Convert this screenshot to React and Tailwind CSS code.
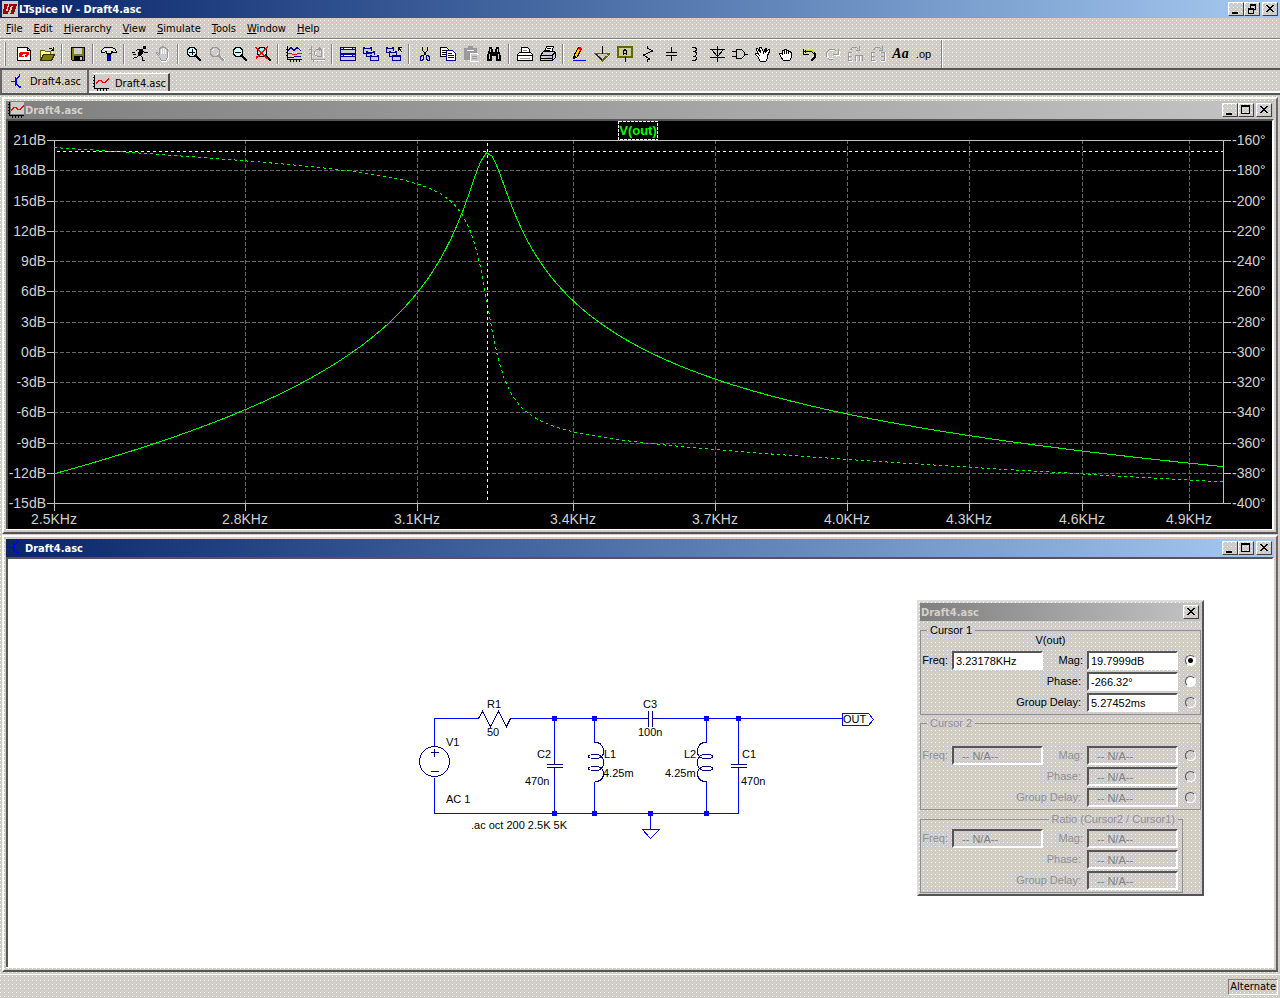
import React, { useState } from 'react';

// Shared looks
const FACE = 'bg-[#cccccc] bg-[image:conic-gradient(at_1px_1px,transparent_75%,#ffffcc_0),conic-gradient(at_1px_1px,transparent_75%,#ffcccc_0)] bg-size-[4px_4px] bg-position-[0_0,2px_2px]';
const RAISED = 'border border-t-white border-l-white border-r-[#404040] border-b-[#404040]';
const UI_FONT = "font-['DejaVu_Sans_Condensed','DejaVu_Sans',sans-serif]";

const ICONS = {
  newSchematic: (
    <>
      <path d="M1.5 1.5h10l3 3v10h-13z" fill="#fff" stroke="#000" />
      <path d="M11.500 1.500v3h3" fill="none" stroke="#000" />
      <path d="M4 6h4v1L6 10h2v1H3V9zM8 6h5v2l-2 3H9V9l1-1H8z" fill="#f00" />
    </>
  ),
  open: (
    <>
      <path d="M1.500 14V4.500h4l1 1h5V8" fill="#ff9" stroke="#660" />
      <path d="M1.500 14.500l3-6h11l-3 6z" fill="#808000" stroke="#330" />
      <path d="M9.500 3.500l1-1h2l2 2M14.500 1v3.500H12" fill="none" stroke="#000" />
    </>
  ),
  save: (
    <>
      <path d="M1.500 1.500h13v13h-12l-1-1z" fill="#808000" stroke="#000" />
      <path d="M4 2h8v6H4z" fill="#ccc" />
      <path d="M4 10h9v4H4z" fill="#000" />
      <path d="M10 11h2v3h-2z" fill="#ccc" />
    </>
  ),
  hammer: (
    <>
      <path d="M.5 6.500v-2l3-3h8l3 2 1 3h-3l-2-1v2h-5v-2l-3 1z" fill="#ddd" stroke="#000" />
      <path d="M3 3h8v1H3z" fill="#fff" />
      <path d="M6 7h4v2H6z" fill="#000" />
      <path d="M6.500 9.500h3v5h-3z" fill="#00f" stroke="#009" />
    </>
  ),
  run: (
    <>
      <path d="M11 0h3v3h-3zM7 4h4v3l-2 3H7l-1-2z" fill="#000" />
      <path d="M3.500 5.500l2-2h4l2 2 1 1h3M8.500 9.500l2 2v3h2M6.500 9.500l-2 2h-2l-2 2M10.500 3.500l-4 5M0 6.500h3M1 8.500h3" fill="none" stroke="#000" />
    </>
  ),
  halt: (
    <>
      <path d="M4.500 10.500l-3-3v-1h1l2 2v-6h1v-1h2v-1h1v1h2v1h1v1h1v8l-2 3h-4l-2-3" fill="#ccc" stroke="#999" />
      <path d="M6.500 3v5M8.500 2v6M10.500 3v5M6 15.500h5l2-3v-7" fill="none" stroke="#fff" />
    </>
  ),
  zoomIn: (
    <>
      <path d="M4 1.500h4l2.500 2.500v4L8 10.500H4L1.500 8V4z" fill="#cff" stroke="#000" />
      <path d="M3 6h6M6 3v6" stroke="#000" strokeWidth="1" />
      <path d="M10 10l5 5" stroke="#000" strokeWidth="2.500" />
    </>
  ),
  zoomPan: (
    <>
      <path d="M4 1.500h4l2.500 2.500v4L8 10.500H4L1.500 8V4z" fill="#ccc" stroke="#999" />
      <path d="M3 5l2-2M8 9l1-2" stroke="#fff" />
      <path d="M10 10l5 5" stroke="#999" strokeWidth="2.500" />
      <path d="M12 10l4 4" stroke="#fff" />
    </>
  ),
  zoomOut: (
    <>
      <path d="M4 1.500h4l2.500 2.500v4L8 10.500H4L1.500 8V4z" fill="#cff" stroke="#000" />
      <path d="M3 6.500h6" stroke="#000" />
      <path d="M10 10l5 5" stroke="#000" strokeWidth="2.500" />
    </>
  ),
  zoomFit: (
    <>
      <path d="M5 1.500h4l2.500 2.500v4L9 10.500H5L2.500 8V4z" fill="#9ff" stroke="#000" />
      <path d="M11 10l5 5" stroke="#000" strokeWidth="2.500" />
      <path d="M1 1l11 12M13 1L1 12" stroke="#f00" strokeWidth="1.500" />
    </>
  ),
  waveforms: (
    <>
      <path d="M1.500 0v13.500h14M0 3.500h2M0 6.500h2M0 9.500h2M4.500 13v3M7.500 13v3M10.500 13v3M13.500 13v3" fill="none" stroke="#000" />
      <path d="M2 4.500l3-3 3 3 3-3 4 3" fill="none" stroke="#009" />
      <path d="M2 7.500h3l2 1h3l2-1h4" fill="none" stroke="#f00" />
      <path d="M2 11.500h5l2-1h6" fill="none" stroke="#009" />
    </>
  ),
  autorange: (
    <>
      <path d="M2.500 0v13.500h13M0 3.500h3M0 7.500h3M4.500 13v3M8.500 13v3M12.500 13v3" fill="none" stroke="#999" />
      <path d="M5.500 8.500v-3l2-2h5v7h-4l-3-2M10.500 1v4M9 2.500h3M12.500 4v7" fill="none" stroke="#999" />
      <path d="M14.500 2v10M5 14.500h10M6.500 6v3" stroke="#fff" />
    </>
  ),
  tileWindows: (
    <>
      <path d="M.5 1.500h15v13H.5z" fill="#ccc" stroke="#009" />
      <path d="M0 1h16v3H0zM0 7h16v4H0z" fill="#009" />
      <path d="M4 2.500h8M4 9.500h8" stroke="#fff" />
      <path d="M1 2h2v1H1zM13 2h2v1h-2zM1 9h2v1H1zM13 9h2v1h-2z" fill="#ccc" />
    </>
  ),
  cascade: (
    <>
      <path d="M.5 1.500h8v6h-8zM3.500 5.500h8v5h-8zM7.500 9.500h8v5h-8z" fill="#ccc" stroke="#009" />
      <path d="M0 1h9v2H0zM3 5h9v2H3zM7 9h9v2H7z" fill="#009" />
      <path d="M2 1.500h5M5 5.500h5M9 9.500h5" stroke="#ccf" />
    </>
  ),
  closeAll: (
    <>
      <path d="M.5 1.500h7v5h-7zM3.500 5.500h7v5h-7zM6.500 9.500h8v5h-8z" fill="#ccc" stroke="#009" />
      <path d="M0 1h8v2H0zM3 5h8v2H3zM6 9h9v2H6z" fill="#009" />
      <path d="M2 1.500h4M5 5.500h4M8 12.500h4" stroke="#ccf" />
      <path d="M12 1.500h4M12.500 1v4M12 1l4 5" stroke="#000" />
    </>
  ),
  cut: (
    <>
      <path d="M5.500 1v3l4 6M10.500 1v3l-4 6" fill="none" stroke="#000" />
      <path d="M4.500 9.500h2v3l-1 2h-2v-3zM9.500 9.500h2l1 2v3h-2l-1-2z" fill="none" stroke="#009" />
    </>
  ),
  copy: (
    <>
      <path d="M.5 1.500h6l2 2v7h-8z" fill="#fff" stroke="#000" />
      <path d="M2 4.500h4M2 6.500h4M2 8.500h4" stroke="#000" />
      <path d="M6.500 4.500h6l3 3v7h-9z" fill="#fff" stroke="#009" />
      <path d="M8 7.500h4M8 9.500h6M8 11.500h6" stroke="#009" />
    </>
  ),
  paste: (
    <>
      <path d="M1 2h4V0h5v2h4v12H1z" fill="#999" />
      <path d="M4 4h7" stroke="#fff" />
      <path d="M7 7h6l3 2v6H7z" fill="#ccc" stroke="#fff" />
      <path d="M9 10.500h5M9 12.500h5" stroke="#999" />
    </>
  ),
  find: (
    <>
      <path d="M3 1h3v2h1v3h2V3h1V1h3v3l2 6v5h-5v-5H6v5H1v-5l2-6z" fill="#000" />
      <path d="M4.500 3v3M3.500 8v5M11.500 3v3M12.500 8v5" stroke="#ccc" />
    </>
  ),
  printSetup: (
    <>
      <path d="M4.500 6.500v-5h6l2 2v3" fill="#fff" stroke="#000" />
      <path d="M.5 8.500l2-2h11l2 2v6H.5z" fill="#fff" stroke="#000" />
      <path d="M1 9.500h14" stroke="#000" />
      <path d="M3 12.500h10M6 4.500h4" stroke="#999" />
    </>
  ),
  print: (
    <>
      <path d="M4.500 6l2-5.500h7L12 6" fill="#fff" stroke="#000" />
      <path d="M7 2.500h4M6 4.500h4" stroke="#000" />
      <path d="M.5 9.500l3-4h11l1 2v4l-3 3H.5z" fill="#ccc" stroke="#000" />
      <path d="M1 9.500h11l3-3M1 12.500h11M12.500 9v5" fill="none" stroke="#000" />
      <path d="M7 11.500h4" stroke="#cc0" />
    </>
  ),
  wire: (
    <>
      <path d="M3.500 8.500l4-7 3 1-4 8-3 2z" fill="#fc0" stroke="#000" />
      <path d="M8 1l3 1-1 3-3-2z" fill="#f00" />
      <path d="M2 10h3l-3 4z" fill="#000" />
      <path d="M2 14.500h13" stroke="#00f" />
    </>
  ),
  ground: (
    <>
      <path d="M1.500 7.500h14l-7 7z" fill="#ccc" stroke="#660" strokeWidth="1.500" />
      <path d="M3 9.500h11" stroke="#cc6" />
      <path d="M8.500 0v8M2 8l6.500 6.500" stroke="#000" />
    </>
  ),
  label: (
    <>
      <path d="M1 1h14v10H1z" fill="#cc9" stroke="#660" strokeWidth="2" />
      <path d="M8.500 11v5M6.500 9V5.500l1-2h1l1 2V9M6.500 7.500h3" fill="none" stroke="#000" />
    </>
  ),
  resistor: <path d="M7.500 0v2l5 3-9 4 6 4-2 1v2" fill="none" stroke="#000" />,
  capacitor: <path d="M8.500 1v6M8.500 9v6M3 6.500h11M3 9.500h11" fill="none" stroke="#000" />,
  inductor: <path d="M6 1.500h3l1.500 1.500v1L9 5.500H7h2L10.500 7v1.500L9 10H7h2l1.500 1.500V13L9 14.500H6" fill="none" stroke="#000" />,
  diode: (
    <>
      <path d="M2.500 3.500h12l-6 7z" fill="#ccc" stroke="#000" />
      <path d="M8.500 0v16M1 3.500h15M1 11.500h15" stroke="#000" />
    </>
  ),
  gate: <path d="M4.500 3.500v9h5l3-3v-3l-3-3zM0 5.500h4M0 10.500h4M13 8.500h3" fill="none" stroke="#000" />,
  move: (
    <path d="M5.500 15.500l-3-5-2-2v-1h2l2 2-3-5v-2h1l3 4-1-5h2l2 5 2-4h1l-1 4 3-3h1v2l-2 4v3l-2 3z" fill="#fff" stroke="#000" />
  ),
  drag: (
    <>
      <path d="M5.500 14.500l-3-4-1-3h2l1 1v-4h2v-1h2v1h2v1h2l1 2v4l-2 3z" fill="#fff" stroke="#000" />
      <path d="M6.500 5v3M8.500 5v3M10.500 5v3" stroke="#000" />
    </>
  ),
  undo: (
    <>
      <path d="M3.500 6.500l2-2h5l3 3v4l-2 2h-2" fill="none" stroke="#000" strokeWidth="2" />
      <path d="M5 4.500h6l2 2" fill="none" stroke="#cc0" />
      <path d="M2.500 3v5.500H8" fill="none" stroke="#000" />
    </>
  ),
  redo: (
    <>
      <path d="M12.500 5.500l-2-2h-5l-3 3v4l3 3h3" fill="none" stroke="#999" />
      <path d="M14.500 3v5.500H9" fill="none" stroke="#999" />
      <path d="M3.500 7v4l2 1.500h3M10 9.500h5.500v-5M6 4.500h4" fill="none" stroke="#fff" />
    </>
  ),
  rotate: (
    <>
      <path d="M3.500 4l2-2.500h4l2 2M12.500 0v4.500H9M5 6.500H1.500v8H5M2 10.500h3M8.500 15V9.500h7V15M12 10v5" fill="none" stroke="#999" />
      <path d="M2.500 7v3M2.500 12v2M2 15.500h4M9.500 10v6M13.500 10v6" stroke="#fff" />
    </>
  ),
  mirror: (
    <>
      <path d="M3.500 4l2-2.500h4l2 2M12.500 0v4.500H9M5 6.500H1.500v8H5M2 10.500h3M11 6.500h3.500v8H11M14 10.500h-3" fill="none" stroke="#999" />
      <path d="M2.500 7v3M2.500 12v2M2 15.500h4M15.500 6v10M11 15.500h5" stroke="#fff" />
    </>
  ),
};

// null marks a separator
const TOOLBAR = [
  ['New Schematic', 'newSchematic'], ['Open', 'open'], null,
  ['Save', 'save'], null,
  ['Control Panel', 'hammer'], null,
  ['Run', 'run'], ['Halt', 'halt'], null,
  ['Zoom to rectangle', 'zoomIn'], ['Pan', 'zoomPan'], ['Zoom back', 'zoomOut'], ['Zoom full extents', 'zoomFit'], null,
  ['Pick visible traces', 'waveforms'], ['Autorange', 'autorange'], null,
  ['Tile windows', 'tileWindows'], ['Cascade windows', 'cascade'], ['Close all windows', 'closeAll'], null,
  ['Cut', 'cut'], ['Copy', 'copy'], ['Paste', 'paste'], ['Find', 'find'], null,
  ['Print Setup', 'printSetup'], ['Print', 'print'], null,
  ['Wire', 'wire'], ['Ground', 'ground'], ['Label Net', 'label'], ['Resistor', 'resistor'],
  ['Capacitor', 'capacitor'], ['Inductor', 'inductor'], ['Diode', 'diode'], ['Component', 'gate'],
  ['Move', 'move'], ['Drag', 'drag'], ['Undo', 'undo'], ['Redo', 'redo'], ['Rotate', 'rotate'], ['Mirror', 'mirror'],
];

const MENU = ['File', 'Edit', 'Hierarchy', 'View', 'Simulate', 'Tools', 'Window', 'Help'];

const Icon = ({ children, className = '' }) => (
  <svg viewBox="0 0 16 16" shapeRendering="crispEdges" className={`size-4 shrink-0 ${className}`} aria-hidden="true">
    {children}
  </svg>
);

const PlotIcon = () => (
  <Icon>
    <path d="M3 0h13v12H3z" fill="#ccc" />
    <path d="M1.500 0v13.500H16M0 2.500h2M0 5.500h2M0 8.500h2M0 11.500h2M4.500 13v3M7.500 13v3M10.500 13v3M13.500 13v3" fill="none" stroke="#000" />
    <path d="M3 8.500l3-3h2l2 2h2l4-4" fill="none" stroke="#f00" strokeWidth="1.500" />
  </Icon>
);

const TransistorIcon = () => (
  <Icon>
    <path d="M1 7.500h4M5.500 3v9M6 5.500l3-3V0M6 9.500l4 4" fill="none" stroke="#00f" />
    <path d="M5 4h2v7H5zM8 14h3v-3z" fill="#00f" />
  </Icon>
);

const CAPTION_GLYPHS = {
  Minimize: <path d="M3 9h6v2H3z" />,
  Maximize: <path d="M2 1h9v9H2zM3 3v6h7V3z" fillRule="evenodd" />,
  Restore: <path d="M5 1h6v6H9v4H3V5h2zM6 3v2h3v1h1V3zM4 7v3h4V7z" fillRule="evenodd" />,
  Close: <path d="M3 2h2v1h1v1h2V3h1V2h2v1h-1v1H9v1H8v1h1v1h1v1h1v1H9V8H8V7H6v1H5v1H3V8h1V7h1V6h1V5H5V4H4V3H3z" />,
};

const CaptionButton = ({ kind, className = '' }) => (
  <button type="button" aria-label={kind} className={`flex h-3.5 w-4 shrink-0 items-center ${FACE} ${RAISED} ${className}`}>
    <svg viewBox="0 0 14 12" shapeRendering="crispEdges" className="h-3 w-3.5" aria-hidden="true">
      {CAPTION_GLYPHS[kind]}
    </svg>
  </button>
);

const ChildWindow = ({ title, icon, active, children }) => (
  <section className="border-2 border-t-white border-l-white border-r-[#666] border-b-[#555] p-0.5">
    <header
      className={`flex h-[18px] items-center px-0.5 ${
        active ? 'bg-linear-to-r from-[#0a246a] to-[#a6caf0] text-white' : 'bg-linear-to-r from-[#808080] to-[#c4c4c4] text-[#d4d0c8]'
      }`}
    >
      {icon}
      <h2 className="ml-px flex-1 pt-0.5 text-[11px] font-bold">{title}</h2>
      <CaptionButton kind="Minimize" />
      <CaptionButton kind="Maximize" />
      <CaptionButton kind="Close" className="ml-0.5" />
    </header>
    <div className="relative border-2 border-t-[#555] border-l-[#555] border-r-white border-b-0">
      {children}
    </div>
    <div className="h-px bg-white" />
  </section>
);

// ---- AC analysis: 50 ohm source, two LC tanks coupled by a capacitor ----
const mul = (a, b) => [a[0] * b[0] - a[1] * b[1], a[0] * b[1] + a[1] * b[0]];
const add = (a, b) => [a[0] + b[0], a[1] + b[1]];
const div = (a, b) => {
  const d = b[0] * b[0] + b[1] * b[1];
  return [(a[0] * b[0] + a[1] * b[1]) / d, (a[1] * b[0] - a[0] * b[1]) / d];
};

const response = (f) => {
  const w = 2 * Math.PI * f;
  const tank = add([0, w * 470e-9], div([1, 0], [0.001, w * 4.25e-3]));
  const couple = [0, w * 100e-9];
  const out = add(couple, tank);
  const node1 = add(add([1 / 50, 0], tank), couple);
  const det = add(mul(node1, out), mul([-1, 0], mul(couple, couple)));
  const v = div(mul([1 / 50, 0], couple), det);
  let phase = (Math.atan2(v[1], v[0]) * 180) / Math.PI;
  if (phase > -100) phase -= 360;
  return { mag: 20 * Math.log10(Math.hypot(v[0], v[1])), phase };
};

const LEFT = 46;
const RIGHT = 1215;
const TOP = 19;
const BOTTOM = 382;
const xOf = (f) => LEFT + (RIGHT - LEFT) * Math.log2(f / 2500);
const magY = (db) => TOP + ((21 - db) / 36) * (BOTTOM - TOP);
const phaseY = (deg) => TOP + ((-160 - deg) / 240) * (BOTTOM - TOP);

const SWEEP = Array.from({ length: 201 }, (_, i) => {
  const f = 2500 * 2 ** (i / 200);
  return { x: xOf(f), ...response(f) };
});
const magLine = SWEEP.map((p) => `${p.x.toFixed(1)},${(magY(p.mag) + 1).toFixed(1)}`).join(' ');
const phaseLine = SWEEP.map((p) => `${p.x.toFixed(1)},${(phaseY(p.phase) + 1).toFixed(1)}`).join(' ');

const DB_TICKS = Array.from({ length: 13 }, (_, i) => 21 - i * 3);
const KHZ_TICKS = ['2.5', '2.8', '3.1', '3.4', '3.7', '4.0', '4.3', '4.6', '4.9'];

const Plot = () => (
  <svg viewBox="0 0 1264 408" className="block w-full bg-black font-['Liberation_Sans',Arial,sans-serif] text-[14px]" role="img" aria-label="V(out) magnitude and phase">
    <g shapeRendering="crispEdges" fill="none">
      <g stroke="#666" strokeDasharray="4 2">
        {DB_TICKS.slice(1, -1).map((db) => (
          <path key={db} d={`M${LEFT} ${Math.round(magY(db)) + 0.5}H${RIGHT}`} />
        ))}
        {KHZ_TICKS.slice(1).map((k) => (
          <path key={k} d={`M${Math.round(xOf(k * 1000)) + 0.5} ${TOP}V${BOTTOM}`} />
        ))}
      </g>
      <g stroke="#c0c0c0">
        <path d={`M${LEFT + 0.5} ${TOP + 0.5}H${RIGHT + 0.5}V${BOTTOM + 0.5}H${LEFT + 0.5}z`} />
        {DB_TICKS.map((db) => (
          <path key={db} d={`M39 ${Math.round(magY(db)) + 0.5}h7M${RIGHT} ${Math.round(magY(db)) + 0.5}h8`} />
        ))}
        {KHZ_TICKS.map((k) => (
          <path key={k} d={`M${Math.round(xOf(k * 1000)) + 0.5} ${BOTTOM}v8`} />
        ))}
      </g>
      <polyline points={phaseLine} stroke="#0f0" strokeDasharray="3 3" />
      <polyline points={magLine} stroke="#0f0" />
      <path d={`M49 30.500H${RIGHT}M479.500 22V${BOTTOM}`} stroke="#fff" strokeDasharray="3 3" />
      <rect x="610.500" y=".5" width="39" height="18" stroke="#fff" strokeDasharray="3 1" />
    </g>
    <text x="630" y="14" textAnchor="middle" fill="#0f0" className="text-[13px] font-bold">V(out)</text>
    <g fill="#d0d0d0">
      {DB_TICKS.map((db, i) => (
        <React.Fragment key={db}>
          <text x="38" y={Math.round(magY(db)) + 5} textAnchor="end">{db}dB</text>
          <text x="1224" y={Math.round(magY(db)) + 5}>{-160 - i * 20}°</text>
        </React.Fragment>
      ))}
      {KHZ_TICKS.map((k) => (
        <text key={k} x={Math.round(xOf(k * 1000))} y="403" textAnchor="middle">{k}KHz</text>
      ))}
    </g>
  </svg>
);

const INDUCTOR = 'M594 742h3q6 2 6 9c0 4-2 7-8 7-4 0-7-1-7-2s3-2 7-2c6 0 8 4 8 8 0 5-2 8-8 8-4 0-7-1-7-2s3-2 7-2c6 0 8 4 8 7q0 6-6 8h-3';
const JUNCTIONS = [[554, 718], [594, 718], [706, 718], [738, 718], [554, 813], [594, 813], [650, 813], [706, 813]];
const PART_LABELS = [
  [487, 708, 'R1'], [487, 736, '50'], [446, 746, 'V1'], [446, 803, 'AC 1'],
  [537, 758, 'C2'], [525, 785, '470n'], [604, 758, 'L1'], [603, 777, '4.25m'],
  [643, 708, 'C3'], [638, 736, '100n'], [684, 758, 'L2'], [665, 777, '4.25m'],
  [742, 758, 'C1'], [741, 785, '470n'], [471, 829, '.ac oct 200 2.5K 5K'], [843, 723, 'OUT'],
];

const Schematic = () => (
  <svg viewBox="8 559 1264 408" className="block w-full bg-white font-['Liberation_Sans',Arial,sans-serif] text-[11px]" role="img" aria-label="Band-pass filter schematic">
    <g transform="translate(.5 .5)" fill="none" shapeRendering="crispEdges">
      <path
        d="M434 745V718H478M510 718H642M658 718H842M434 777V813H738V774M554 718V758M554 774V813M594 718V742M594 781V813M706 718V742M706 781V813M738 718V758M650 813V829M642 829H659L650 838zM842 713H868L873 719L868 725H842z"
        stroke="#00f"
      />
      <g stroke="#000080">
        <circle cx="434" cy="761" r="15" />
        <path d="M430 752h8M434 748v8M430 771h8" />
        <path d="M478 718l4-7 8 15 8-15 8 15 4-8" />
        <path d="M642 718h6M648 710v16M652 710v16M652 718h6" />
        <path d="M554 758v6M546 764h16M546 767h16M554 767v7" />
        <path d="M738 758v6M730 764h16M730 767h16M738 767v7" />
        <path d={INDUCTOR} />
        <path d={INDUCTOR} transform="translate(1300 0) scale(-1 1)" />
      </g>
    </g>
    {JUNCTIONS.map(([x, y]) => (
      <rect key={`${x}-${y}`} x={x - 2} y={y - 2} width="5" height="5" fill="#00f" />
    ))}
    {PART_LABELS.map(([x, y, label]) => (
      <text key={`${x}-${y}`} x={x} y={y}>{label}</text>
    ))}
  </svg>
);

const ReadOut = ({ id, label, value, disabled, wide }) => (
  <>
    <label htmlFor={id} className={wide ? 'col-span-3 pr-1.5 text-right leading-[19px]' : 'pr-1 text-right leading-[19px]'}>{label}</label>
    <input
      id={id}
      type="text"
      readOnly
      disabled={disabled}
      value={value}
      className={`h-[19px] w-full min-w-0 border-2 border-t-[#555] border-l-[#555] border-r-white border-b-white ${
        disabled ? 'bg-transparent pl-2 text-[#808080]' : 'bg-white pl-0.5 text-black'
      }`}
    />
  </>
);

const CursorGroup = ({ id, legend, legendClass = '', boxClass = '', caption, captionClass, values, disabled, radios, picked, onPick }) => {
  const rows = [['mag', 'Mag:'], ['phase', 'Phase:'], ['delay', 'Group Delay:']];
  return (
    <fieldset className={`border border-[#909090] ${disabled ? 'text-[#909090]' : ''} ${boxClass}`}>
      <legend className={`h-3 px-[3px] leading-3 ${legendClass}`}>{legend}</legend>
      <p className={`text-center leading-2 ${captionClass}`}>{caption}</p>
      {rows.map(([key, label], i) => (
        <div key={key} className="grid h-[21px] grid-cols-[31px_91px_44px_91px_1fr] items-start">
          {i === 0 && <ReadOut id={`${id}-freq`} label="Freq:" value={values.freq} disabled={disabled} />}
          <ReadOut id={`${id}-${key}`} label={label} value={values[key]} disabled={disabled} wide={i > 0} />
          {radios && (
            <input
              type="radio"
              name="trace"
              aria-label={`${legend} ${label}`}
              disabled={disabled || key === 'delay'}
              checked={picked === `${id}-${key}`}
              onChange={() => onPick(`${id}-${key}`)}
              className="mt-1 ml-[7px] size-[11px] appearance-none rounded-full border border-t-[#555] border-l-[#555] border-r-white border-b-white bg-white checked:bg-[radial-gradient(#000_2px,#fff_3px)] disabled:bg-transparent"
            />
          )}
        </div>
      ))}
    </fieldset>
  );
};

const NA = { freq: '-- N/A--', mag: '-- N/A--', phase: '-- N/A--', delay: '-- N/A--' };

const CursorDialog = () => {
  const [picked, setPicked] = useState('c1-mag');
  return (
    <div
      role="dialog"
      aria-label="Draft4.asc"
      className={`absolute top-[41px] right-[68px] w-[287px] border-2 border-t-[#ddd] border-l-[#ddd] border-r-[#555] border-b-[#555] p-px font-['Liberation_Sans',Arial,sans-serif] text-[11px] ${FACE}`}
    >
      <header className={`flex h-[18px] items-center bg-linear-to-r from-[#808080] to-[#c4c4c4] pr-0.5 pl-px font-bold text-[#d4d0c8] ${UI_FONT}`}>
        <h2 className="flex-1 pt-0.5">Draft4.asc</h2>
        <CaptionButton kind="Close" />
      </header>
      <CursorGroup
        id="c1" legend="Cursor 1" legendClass="ml-1.5" boxClass="mt-[3px]" caption="V(out)" captionClass="h-[15px] pr-5"
        values={{ freq: '3.23178KHz', mag: '19.7999dB', phase: '-266.32°', delay: '5.27452ms' }}
        radios picked={picked} onPick={setPicked}
      />
      <CursorGroup
        id="c2" legend="Cursor 2" legendClass="ml-1.5" boxClass="mt-0.5" captionClass="h-[17px]"
        values={NA} disabled radios picked={picked} onPick={setPicked}
      />
      <CursorGroup
        id="ratio" legend="Ratio (Cursor2 / Cursor1)" legendClass="ml-auto mr-1" boxClass="mt-[3px] mr-[18px]" captionClass="h-1"
        values={NA} disabled
      />
    </div>
  );
};

const App = () => {
  return (
    <div className={`flex min-h-screen flex-col text-[11px] leading-[14px] text-black ${FACE} ${UI_FONT}`}>
      <header className="flex h-[18px] items-center bg-linear-to-r from-[#0a246a] to-[#a6caf0] px-0.5 text-white">
        <Icon>
          <path d="M0 0h16v16H0z" fill="#ccc" />
          <path d="M2 3h4L4 10h3l-1 3H1zM7 3h8l-3 10H8l3-8H9l-2 5H6z" fill="#900" />
        </Icon>
        <h1 className="ml-px flex-1 pt-0.5 text-[11px] font-bold">LTspice IV - Draft4.asc</h1>
        <CaptionButton kind="Minimize" />
        <CaptionButton kind="Restore" />
        <CaptionButton kind="Close" className="ml-0.5" />
      </header>

      <nav className="flex h-[21px] items-center gap-[11px] border-b border-[#808080] pt-0.5 pl-1.5">
        {MENU.map((m) => (
          <button key={m} type="button"><span className="underline underline-offset-1">{m[0]}</span>{m.slice(1)}</button>
        ))}
      </nav>

      <div role="toolbar" className="flex h-[31px] items-center border-t border-b-2 border-t-white border-b-[#555] pl-1">
        <span className="mr-1.5 h-6 w-0.5 border-l border-r border-l-white border-r-[#808080]" />
        {TOOLBAR.map((item, i) =>
          item ? (
            <button key={item[1]} type="button" title={item[0]} aria-label={item[0]} className="flex h-[22px] w-[23px] items-center justify-center">
              <Icon>{ICONS[item[1]]}</Icon>
            </button>
          ) : (
            <span key={i} className="flex w-2 justify-center"><span className="h-5 w-0.5 border-l border-r border-l-[#808080] border-r-white" /></span>
          )
        )}
        <button type="button" title="Text" className="h-[22px] w-[23px] font-['Liberation_Serif',serif] text-[14px] font-bold italic">Aa</button>
        <button type="button" title="SPICE Directive" className="h-[22px] w-[23px] font-['Liberation_Sans',sans-serif] text-[11px]">.op</button>
        <span className="ml-1.5 h-7 w-0.5 border-l border-r border-l-[#808080] border-r-white" />
      </div>

      <div role="tablist" className="flex h-[25px] items-start border-b-2 border-l-2 border-b-[#555] border-l-[#666]">
        <button type="button" role="tab" aria-selected="true" className="flex h-[23px] w-[87px] items-center border-r-2 border-[#666] pl-2">
          <TransistorIcon />
          <span className="ml-1 pt-px">Draft4.asc</span>
        </button>
        <div className="flex h-[23px] flex-1 items-end border-b-2 border-white pl-1">
          <button type="button" role="tab" aria-selected="false" className="flex h-[18px] w-[77px] items-center border-t border-r-2 border-t-white border-r-[#444]">
            <PlotIcon />
            <span className="ml-1.5 pt-0.5">Draft4.asc</span>
          </button>
        </div>
      </div>

      <main className="flex flex-1 flex-col gap-px px-0.5 pt-0.5">
        <ChildWindow title="Draft4.asc" icon={<PlotIcon />}>
          <Plot />
        </ChildWindow>
        <ChildWindow title="Draft4.asc" icon={<TransistorIcon />} active>
          <Schematic />
          <CursorDialog />
        </ChildWindow>
      </main>

      <footer className="flex h-6 items-center justify-end border-t border-white pr-0.5">
        <span className="border border-t-[#808080] border-l-[#808080] border-r-white border-b-white px-px">Alternate</span>
      </footer>
    </div>
  );
};

export default App;
